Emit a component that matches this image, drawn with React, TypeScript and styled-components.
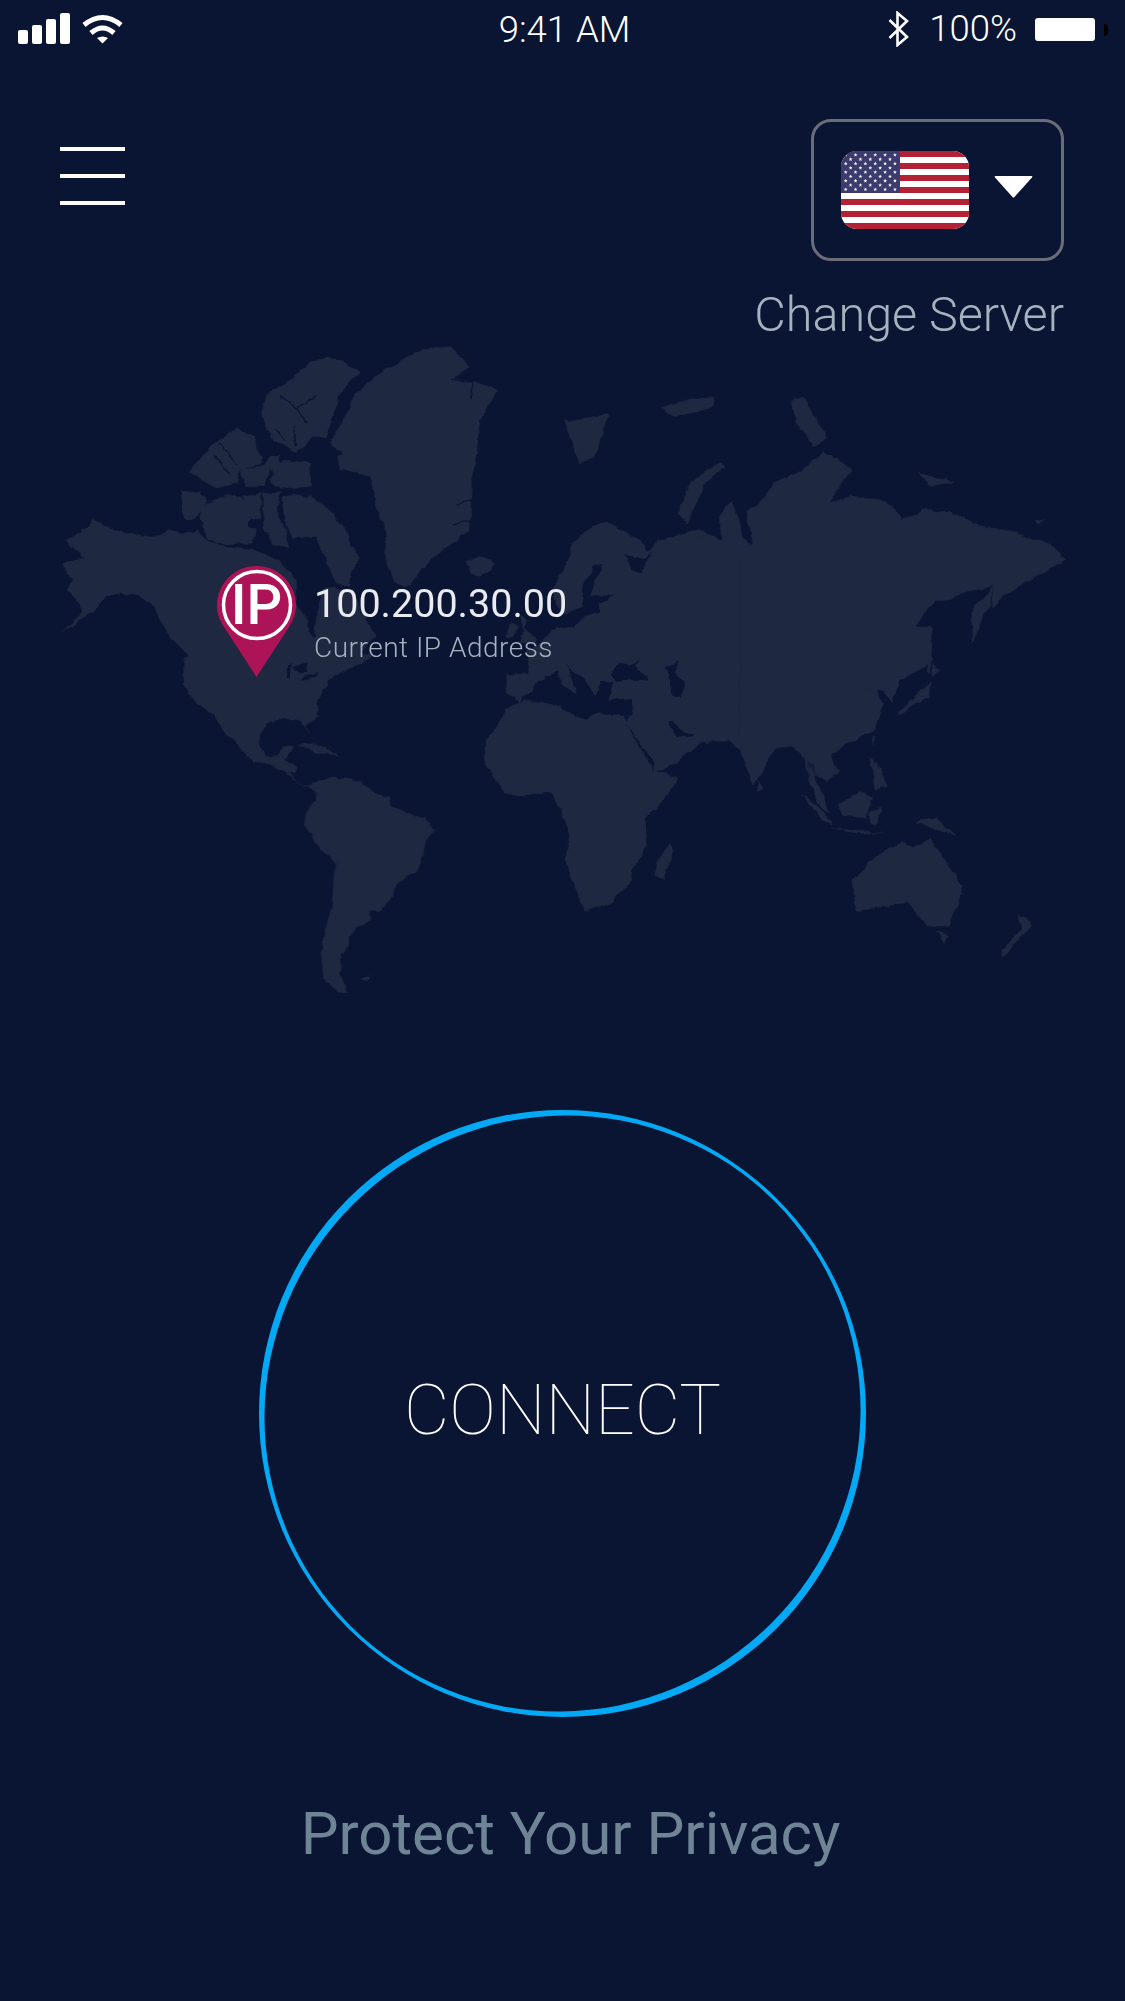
import styled, { createGlobalStyle } from "styled-components";

const BG = "#0a1433";
const LAND = "#1e2840";

const GlobalStyle = createGlobalStyle`
  html, body {
    margin: 0;
    padding: 0;
    background: ${BG};
  }
  * {
    box-sizing: border-box;
  }
`;

const Screen = styled.div`
  width: 1125px;
  height: 2001px;
  background: ${BG};
  font-family: Roboto, "Liberation Sans", sans-serif;
  overflow: hidden;
  display: flex;
  flex-direction: column;
`;

const StatusBar = styled.div`
  height: 58px;
  padding: 0 17px 0 18px;
  display: grid;
  grid-template-columns: 1fr auto 1fr;
  align-items: center;
  color: #fff;
  font-size: 36.5px;
  font-weight: 300;
`;

const StatusLeft = styled.div`
  display: flex;
  align-items: flex-end;
  gap: 12px;
  height: 31px;
  margin-top: -1px;
`;

const SignalBars = styled.div`
  display: flex;
  align-items: flex-end;
  gap: 4px;
  height: 31px;
`;

const SignalBar = styled.span<{ $h: number }>`
  display: block;
  width: 10px;
  height: ${(p) => p.$h}px;
  background: #fff;
  border-radius: 2px;
`;

const StatusTime = styled.div`
  padding-left: 3px;
  margin-top: 1px;
`;

const StatusRight = styled.div`
  display: flex;
  align-items: center;
  justify-content: flex-end;
`;

const Percent = styled.span`
  margin: -1px 18px 0 20px;
`;

const Battery = styled.span`
  display: block;
  width: 60px;
  height: 23px;
  margin-top: 1px;
  background: #fff;
  border-radius: 3px;
`;

const BatteryTip = styled.span`
  display: block;
  width: 4px;
  height: 12px;
  margin: 1px 0 0 9px;
  background: #000;
  border-radius: 0 6px 6px 0;
`;

const TopBar = styled.div`
  display: flex;
  justify-content: space-between;
  align-items: flex-start;
  padding: 61px 61px 0 60px;
  height: 282px;
`;

const MenuButton = styled.div`
  width: 65px;
  margin-top: 28px;
  display: flex;
  flex-direction: column;
  gap: 23px;
`;

const MenuLine = styled.span`
  display: block;
  height: 4px;
  background: #fff;
`;

const ServerColumn = styled.div`
  display: flex;
  flex-direction: column;
  align-items: flex-end;
`;

const ServerSelect = styled.div`
  width: 253px;
  height: 142px;
  border: 3px solid #6a6d78;
  border-radius: 20px;
  padding: 0 0 0 27px;
  display: flex;
  align-items: center;
`;

const Flag = styled.svg`
  display: block;
  width: 128px;
  height: 78px;
  border-radius: 16px;
`;

const Caret = styled.svg`
  display: block;
  margin: -6px 0 0 25px;
`;

const ServerLabel = styled.div`
  margin-top: 26px;
  font-size: 48.5px;
  line-height: 56px;
  font-weight: 300;
  color: #a5b3bf;
  white-space: nowrap;
`;

const MapArea = styled.div`
  position: relative;
  height: 660px;
  flex: none;
`;

const MapSvg = styled.svg`
  display: block;
  width: 1125px;
  height: 660px;
`;

const Land = styled.g`
  fill: ${LAND};
  stroke: ${LAND};
  stroke-width: 1px;
  stroke-linejoin: round;
`;

const Water = styled.g`
  fill: ${BG};
`;

const Fjords = styled.path`
  fill: none;
  stroke: ${BG};
  stroke-width: 4px;
  stroke-linecap: round;
  stroke-linejoin: round;
`;

const Marker = styled.div`
  position: absolute;
  left: 217px;
  top: 226px;
  display: flex;
  align-items: flex-start;
`;

const PinWrap = styled.div`
  position: relative;
  width: 79px;
  height: 111px;
`;

const PinText = styled.span`
  position: absolute;
  top: 6px;
  left: 0;
  width: 79px;
  text-align: center;
  font-size: 56px;
  line-height: 66px;
  font-weight: 500;
  color: #fff;
`;

const IpBlock = styled.div`
  margin-left: 18px;
  padding-top: 14px;
  white-space: nowrap;
`;

const IpValue = styled.div`
  font-size: 39.5px;
  line-height: 47px;
  color: #e9ebf0;
`;

const IpCaption = styled.div`
  margin-top: 4px;
  font-size: 28px;
  line-height: 33px;
  font-weight: 300;
  color: #a5b3bf;
  letter-spacing: 0.5px;
`;

const ConnectArea = styled.div`
  display: flex;
  justify-content: center;
  padding-top: 110px;
`;

const ConnectButton = styled.div`
  position: relative;
  width: 607px;
  height: 607px;
  display: flex;
  align-items: center;
  justify-content: center;
`;

const Ring = styled.svg`
  position: absolute;
  inset: 0;
  width: 607px;
  height: 607px;
`;

const ConnectLabel = styled.span`
  position: relative;
  margin-top: -8px;
  font-size: 70px;
  font-weight: 100;
  color: #fff;
`;

const Tagline = styled.div`
  margin-top: 80px;
  padding-left: 16px;
  text-align: center;
  font-size: 60px;
  line-height: 73px;
  color: #6f8595;
`;

const Star = ({ x, y }: { x: number; y: number }) => {
  const pts = Array.from({ length: 10 }, (_, i) => {
    const r = i % 2 === 0 ? 2 : 0.85;
    const a = (Math.PI / 5) * i - Math.PI / 2;
    return `${(x + r * Math.cos(a)).toFixed(2)},${(y + r * Math.sin(a)).toFixed(2)}`;
  }).join(" ");
  return <polygon points={pts} fill="#fff" />;
};

const UsFlag = () => {
  const stripeH = 78 / 13;
  const stars: { x: number; y: number }[] = [];
  for (let row = 0; row < 9; row++) {
    const count = row % 2 === 0 ? 6 : 5;
    for (let col = 0; col < count; col++) {
      stars.push({
        x: (row % 2 === 0 ? 4.7 : 9.6) + col * 9.85,
        y: 4 + row * 4.3,
      });
    }
  }
  return (
    <Flag viewBox="0 0 128 78">
      <rect width="128" height="78" fill="#fff" />
      {Array.from({ length: 7 }, (_, i) => (
        <rect key={i} y={i * 2 * stripeH} width="128" height={stripeH} fill="#b22234" />
      ))}
      <rect width="59" height={stripeH * 7} fill="#3c3b6e" />
      {stars.map((s, i) => (
        <Star key={i} x={s.x} y={s.y} />
      ))}
    </Flag>
  );
};

// traced from the reference, each group in its own crop coordinates
const NORTH_AMERICA = [
  "M65 670L130 650L80 605L165 540L215 565L335 595L385 568L430 580L470 572L510 605L560 622L640 630L720 660L745 690L770 720L770 800L800 830L812 892L825 890L838 790L850 745L885 740L940 765L990 860L1005 890L960 940L1000 950L930 985L880 1010L850 1050L830 1090L835 1135L795 1155L805 1182L780 1140L730 1135L680 1150L660 1175L660 1215L680 1250L715 1245L730 1222L755 1220L735 1265L770 1275L765 1300L745 1295L775 1330L800 1340L825 1330L830 1350L790 1338L760 1320L735 1295L680 1270L640 1260L595 1230L585 1200L540 1175L515 1125L495 1110L455 1075L432 1035L430 960L445 945L400 900L370 860L345 800L300 770L240 755L200 770L160 815L60 880L130 815L120 790L80 750L100 720Z",
  "M420 520L430 450L475 455L505 480L470 530L440 540Z",
  "M480 500L520 480L565 465L600 470L640 500L625 560L650 570L640 610L560 615L510 600L485 560Z",
  "M610 470L665 460L660 540L625 530Z",
  "M670 460L720 458L710 520L740 570L745 620L700 615L670 560Z",
  "M725 480L760 462L810 470L865 505L915 565L935 620L960 650L935 700L930 740L885 725L860 660L825 590L785 590L760 600L735 545Z",
  "M445 395L490 345L510 320L550 295L590 265L640 290L665 350L660 375L600 385L590 430L530 445L490 420Z",
  "M600 385L665 380L680 360L720 345L725 385L690 390L670 440L615 440Z",
  "M695 385L740 360L810 370L815 440L720 445L695 425Z",
  "M710 145L780 100L810 65L880 55L960 95L900 160L860 290L820 290L770 340L720 310L695 300L665 230L680 165Z",
  "M870 310L920 220L945 160L1000 110L1090 60L1150 25L1230 20L1290 80L1240 115L1320 130L1375 150L1320 240L1310 340L1295 420L1290 570L1170 660L1130 710L1100 745L1060 730L1030 640L1040 580L1010 500L990 410L900 385L890 345L910 340Z",
  "M1280 665L1330 650L1365 675L1320 710L1290 695Z",
];

const CANADA_FJORDS =
  "M725 170L770 205L825 170M770 205L800 250M760 260L770 320M710 270L735 300M520 350L570 400M540 310L590 370M1230 118L1300 125L1290 180M1240 555L1290 540M1250 490L1300 480";

const SOUTH_AMERICA = [
  "M465 370L520 350L600 362L640 395L690 410L695 440L740 455L800 480L825 510L790 560L785 610L760 640L710 670L700 710L660 755L625 750L635 780L595 800L570 830L570 850L545 885L540 940L560 995L535 1000L490 950L482 880L495 810L515 740L525 605L480 565L433 490L440 450L465 420Z",
  "M470 250L545 288L480 280L410 255Z",
  "M605 952L630 950L620 960Z",
];

const GREAT_LAKES = [
  "M380 55L385 15L395 10L392 60Z",
  "M400 20L440 10L445 35L420 40Z",
  "M420 60L470 35L475 40L435 62Z",
  "M155 165L165 170L205 235L195 245Z",
];

const EUROPE = [
  "M200 585L265 580L268 545L255 520L290 495L340 450L390 440L375 400L345 370L340 320L385 240L400 190L440 150L500 125L540 150L600 180L640 230L700 180L790 170L900 230L900 780L780 790L700 730L650 720L575 710L550 660L300 660L235 665L220 650L200 640Z",
  "M195 470L215 430L235 440L225 470Z",
  "M240 405L265 420L250 445L285 470L290 490L240 490L250 450Z",
];

const EUROPE_WATER = [
  "M235 662L275 640L290 605L330 585L355 575L365 615L410 640L385 555L440 610L470 650L480 610L520 605L505 660L575 655L578 700L560 712L470 700L440 720L370 690L365 670L300 660Z",
  "M515 585L540 545L575 555L600 540L585 560L625 590L625 605L570 600L530 605Z",
  "M675 560L720 540L700 580L735 605L725 650L695 650L690 600Z",
  "M430 320L465 250L490 255L465 300L450 350L525 345L480 370L480 395L440 410L395 440L370 430L380 400L425 380Z",
  "M555 225L610 240L640 215L600 280L575 270Z",
  "M685 725L700 722L715 745L760 770L740 775L710 770L690 745Z",
  "M555 725L562 735L640 845L640 870Z",
];

const AFRICA =
  "M485 747L492 733L507 710L518 702L540 702L562 707L587 720L600 712L625 717L653 772L677 777L663 800L645 820L647 846L632 868L630 881L612 902L586 911L576 889L566 859L570 833L560 807L550 792L524 796L505 792L497 781L486 764Z";

const ASIA = [
  "M390 490L430 475L500 460L555 485L552 430L580 392L595 430L610 480L635 495L620 420L650 400L690 355L760 320L815 280L880 320L825 400L880 385L950 390L990 410L1010 440L1060 415L1130 420L1200 450L1290 465L1380 495L1420 530L1340 570L1270 610L1230 640L1240 590L1190 600L1090 630L1040 680L1085 690L1080 770L1000 810L985 860L960 830L915 830L945 825L960 860L940 920L850 965L830 980L850 1020L820 1040L790 1025L780 1000L735 960L690 965L650 1030L635 1050L600 965L555 935L490 935L505 950L440 1000L390 1022L320 905L330 860L170 850L150 700L300 600Z",
  "M1180 650L1240 590L1225 640L1185 720Z",
  "M1076 720L1084 720L1080 790L1074 790Z",
  "M1000 880L1080 810L1075 850L1040 860L1005 888Z",
  "M1085 770L1105 785L1085 800Z",
  "M445 420L480 350L550 305L565 315L520 350L480 420L470 450Z",
  "M160 210L270 195L240 290L200 310L180 260Z",
  "M400 180L470 160L540 155L530 180L440 200Z",
  "M730 165L760 155L820 250L790 270L740 210Z",
  "M1050 330L1140 350L1080 360Z",
  "M1345 435L1365 440L1350 445Z",
  "M760 965L790 1030L828 1115L810 1105L780 1050Z",
  "M755 1070L800 1100L835 1140L810 1132Z",
  "M830 1145L960 1162L890 1160Z",
  "M850 1095L905 1060L935 1080L915 1125L860 1120Z",
  "M925 1110L960 1105L945 1140L930 1135Z",
  "M930 985L945 1000L970 1050L940 1060Z",
  "M932 940L940 935L936 955Z",
  "M1040 1130L1090 1125L1145 1165L1080 1150Z",
  "M650 1040L658 1060L645 1062Z",
  "M882 1270L950 1210L1010 1180L1040 1195L1080 1175L1160 1280L1130 1370L1075 1375L1020 1320L960 1330L895 1340Z",
  "M1100 1385L1125 1395L1115 1415Z",
  "M1300 1345L1335 1370L1260 1445L1255 1430L1310 1380Z",
  "M430 1185L435 1200L410 1270L390 1260L395 1220Z",
];

const WorldMap = () => (
  <MapSvg viewBox="0 340 1125 660">
    <defs>
      {/* roughens the traced outlines into coastlines */}
      <filter
        id="coast"
        x="0"
        y="340"
        width="1125"
        height="660"
        filterUnits="userSpaceOnUse"
        colorInterpolationFilters="sRGB"
      >
        <feTurbulence type="fractalNoise" baseFrequency="0.09" numOctaves="3" seed="4" />
        <feDisplacementMap in="SourceGraphic" scale="6" xChannelSelector="R" yChannelSelector="G" />
      </filter>
    </defs>
    <g filter="url(#coast)">
      <Land>
        <path d={AFRICA} />
        <g transform="translate(500 330) scale(0.3986 0.4337)">
          {ASIA.map((d) => (
            <path key={d} d={d} />
          ))}
        </g>
        <g transform="translate(440 480) scale(0.3333)">
          {EUROPE.map((d) => (
            <path key={d} d={d} />
          ))}
        </g>
        <g transform="translate(40 340) scale(0.3333)">
          {NORTH_AMERICA.map((d) => (
            <path key={d} d={d} />
          ))}
        </g>
        <g transform="translate(160 660) scale(0.3333)">
          {SOUTH_AMERICA.map((d) => (
            <path key={d} d={d} />
          ))}
        </g>
      </Land>
      <Water>
        <g transform="translate(440 480) scale(0.3333)">
          {EUROPE_WATER.map((d) => (
            <path key={d} d={d} />
          ))}
        </g>
        <g transform="translate(160 660) scale(0.3333)">
          {GREAT_LAKES.map((d) => (
            <path key={d} d={d} />
          ))}
        </g>
        <g transform="translate(40 340) scale(0.3333)">
          <Fjords d={CANADA_FJORDS} />
        </g>
      </Water>
    </g>
  </MapSvg>
);

const App = () => {
  return (
    <Screen>
      <GlobalStyle />
      <StatusBar>
        <StatusLeft>
          <SignalBars>
            <SignalBar $h={14} />
            <SignalBar $h={19} />
            <SignalBar $h={25} />
            <SignalBar $h={31} />
          </SignalBars>
          <svg width="41" height="30" viewBox="0 0 41 30">
            <path d="M2 11Q20.5 -4 39 11" fill="none" stroke="#fff" strokeWidth="5" />
            <path d="M9 19Q20.5 9 32 19" fill="none" stroke="#fff" strokeWidth="5" />
            <path d="M15 24Q20.5 21 26 24L20.5 29.5Z" fill="#fff" />
          </svg>
        </StatusLeft>
        <StatusTime>9:41 AM</StatusTime>
        <StatusRight>
          <svg width="21" height="36" viewBox="0 0 21 36">
            <path d="M1.5 9L19 26L9.5 34V2L19 10L1.5 27" fill="none" stroke="#fff" strokeWidth="2.6" />
          </svg>
          <Percent>100%</Percent>
          <Battery />
          <BatteryTip />
        </StatusRight>
      </StatusBar>

      <TopBar>
        <MenuButton>
          <MenuLine />
          <MenuLine />
          <MenuLine />
        </MenuButton>
        <ServerColumn>
          <ServerSelect>
            <UsFlag />
            <Caret width="39" height="22" viewBox="0 0 39 22">
              <path d="M1.5 0H37.5Q39 0 38 1.5L20.5 21Q19.5 22 18.5 21L1 1.5Q0 0 1.5 0Z" fill="#fff" />
            </Caret>
          </ServerSelect>
          <ServerLabel>Change Server</ServerLabel>
        </ServerColumn>
      </TopBar>

      <MapArea>
        <WorldMap />
        <Marker>
          <PinWrap>
            <svg width="79" height="111" viewBox="0 0 79 111">
              <path d="M39.5 0C61.3 0 79 17.7 79 39.5C79 48 76 55 71 62.5L39.5 111L8 62.5C3 55 0 48 0 39.5C0 17.7 17.7 0 39.5 0Z" fill="#ad1457" />
              <circle cx="40" cy="39" r="33.5" fill="none" stroke="#fff" strokeWidth="3.5" />
            </svg>
            <PinText>IP</PinText>
          </PinWrap>
          <IpBlock>
            <IpValue>100.200.30.00</IpValue>
            <IpCaption>Current IP Address</IpCaption>
          </IpBlock>
        </Marker>
      </MapArea>

      <ConnectArea>
        <ConnectButton>
          <Ring viewBox="0 0 607 607">
            <circle cx="303.5" cy="303.5" r="303.5" fill="#03a9f4" />
            <ellipse cx="303.5" cy="303.5" rx="296" ry="300" transform="rotate(45 303.5 303.5)" fill={BG} />
          </Ring>
          <ConnectLabel>CONNECT</ConnectLabel>
        </ConnectButton>
      </ConnectArea>

      <Tagline>Protect Your Privacy</Tagline>
    </Screen>
  );
};

export default App;
